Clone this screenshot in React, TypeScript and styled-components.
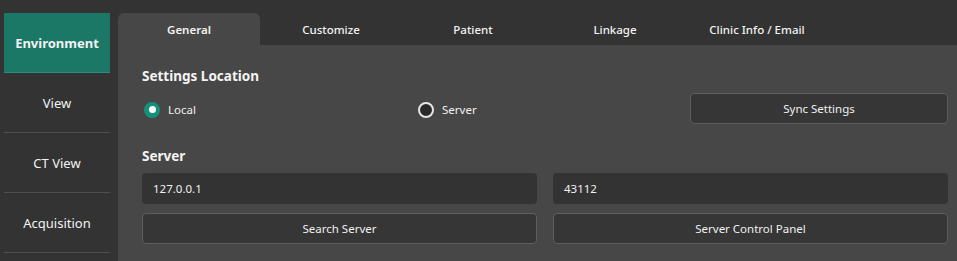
import styled, { createGlobalStyle } from "styled-components";

const GlobalStyle = createGlobalStyle`
  body {
    margin: 0;
    background: #333333;
    font-family: "Noto Sans", "Open Sans", sans-serif;
    color: #f0f0f0;
  }
`;

const Page = styled.div`
  display: flex;
  height: 261px;
  padding-top: 13px;
  box-sizing: border-box;
  overflow: hidden;
`;

const Sidebar = styled.nav`
  width: 106px;
  margin: 0 8px 0 4px;
  display: flex;
  flex-direction: column;
`;

const NavItem = styled.div<{ $active?: boolean }>`
  height: 60px;
  display: flex;
  align-items: center;
  justify-content: center;
  box-sizing: border-box;
  font-size: 13px;
  font-weight: ${(p) => (p.$active ? 700 : 400)};
  background: ${(p) => (p.$active ? "#1b7866" : "transparent")};
  border-bottom: 1px solid ${(p) => (p.$active ? "#2b8f7c" : "#4f4f4f")};
  color: #f2f2f2;
`;

const Main = styled.main`
  flex: 1;
  display: flex;
  flex-direction: column;
`;

const TabBar = styled.div`
  display: flex;
  height: 32px;
`;

const Tab = styled.div<{ $active?: boolean }>`
  width: 142px;
  display: flex;
  align-items: center;
  justify-content: center;
  font-size: 11.5px;
  font-weight: ${(p) => (p.$active ? 600 : 500)};
  color: #f2f2f2;
  background: ${(p) => (p.$active ? "#474747" : "transparent")};
  border-radius: 6px 6px 0 0;
`;

const Panel = styled.section`
  flex: 1;
  background: #474747;
  padding: 21px 9px 0 24px;
`;

const Heading = styled.h3<{ $gap?: number }>`
  margin: ${(p) => p.$gap ?? 0}px 0 0;
  font-size: 13.5px;
  line-height: 20px;
  font-weight: 700;
  color: #f4f4f4;
`;

const Row = styled.div<{ $cols: number; $gap: number }>`
  display: grid;
  grid-template-columns: repeat(${(p) => p.$cols}, 1fr);
  column-gap: 16px;
  margin-top: ${(p) => p.$gap}px;
  height: 31px;
`;

const RadioLabel = styled.label`
  display: flex;
  align-items: center;
  gap: 8px;
  padding-left: 2px;
  padding-top: 2px;
  font-size: 11.5px;
  color: #f0f0f0;
`;

const RadioDot = styled.span<{ $checked?: boolean }>`
  width: 16px;
  height: 16px;
  box-sizing: border-box;
  border-radius: 50%;
  display: flex;
  align-items: center;
  justify-content: center;
  background: ${(p) => (p.$checked ? "#17907a" : "#2a2a2a")};
  border: 2px solid ${(p) => (p.$checked ? "#17907a" : "#e6e6e6")};
  &::after {
    content: "";
    display: ${(p) => (p.$checked ? "block" : "none")};
    width: 7px;
    height: 7px;
    border-radius: 50%;
    background: #ffffff;
  }
`;

const Button = styled.div`
  display: flex;
  align-items: center;
  justify-content: center;
  box-sizing: border-box;
  background: #363636;
  border: 1px solid #5e5e5e;
  border-radius: 4px;
  font-size: 11.5px;
  color: #f0f0f0;
`;

const Field = styled.div`
  display: flex;
  align-items: center;
  padding-left: 11px;
  background: #333333;
  border-radius: 4px;
  font-size: 11.5px;
  color: #f0f0f0;
`;

const navItems = ["Environment", "View", "CT View", "Acquisition"];
const tabs = ["General", "Customize", "Patient", "Linkage", "Clinic Info / Email"];

export default function App() {
  return (
    <>
      <GlobalStyle />
      <Page>
        <Sidebar>
          {navItems.map((item, i) => (
            <NavItem key={item} $active={i === 0}>
              {item}
            </NavItem>
          ))}
        </Sidebar>
        <Main>
          <TabBar>
            {tabs.map((tab, i) => (
              <Tab key={tab} $active={i === 0}>
                {tab}
              </Tab>
            ))}
          </TabBar>
          <Panel>
            <Heading>Settings Location</Heading>
            <Row $cols={3} $gap={7}>
              <RadioLabel>
                <RadioDot $checked />
                Local
              </RadioLabel>
              <RadioLabel>
                <RadioDot />
                Server
              </RadioLabel>
              <Button>Sync Settings</Button>
            </Row>
            <Heading $gap={22}>Server</Heading>
            <Row $cols={2} $gap={7}>
              <Field>127.0.0.1</Field>
              <Field>43112</Field>
            </Row>
            <Row $cols={2} $gap={9}>
              <Button>Search Server</Button>
              <Button>Server Control Panel</Button>
            </Row>
          </Panel>
        </Main>
      </Page>
    </>
  );
}
